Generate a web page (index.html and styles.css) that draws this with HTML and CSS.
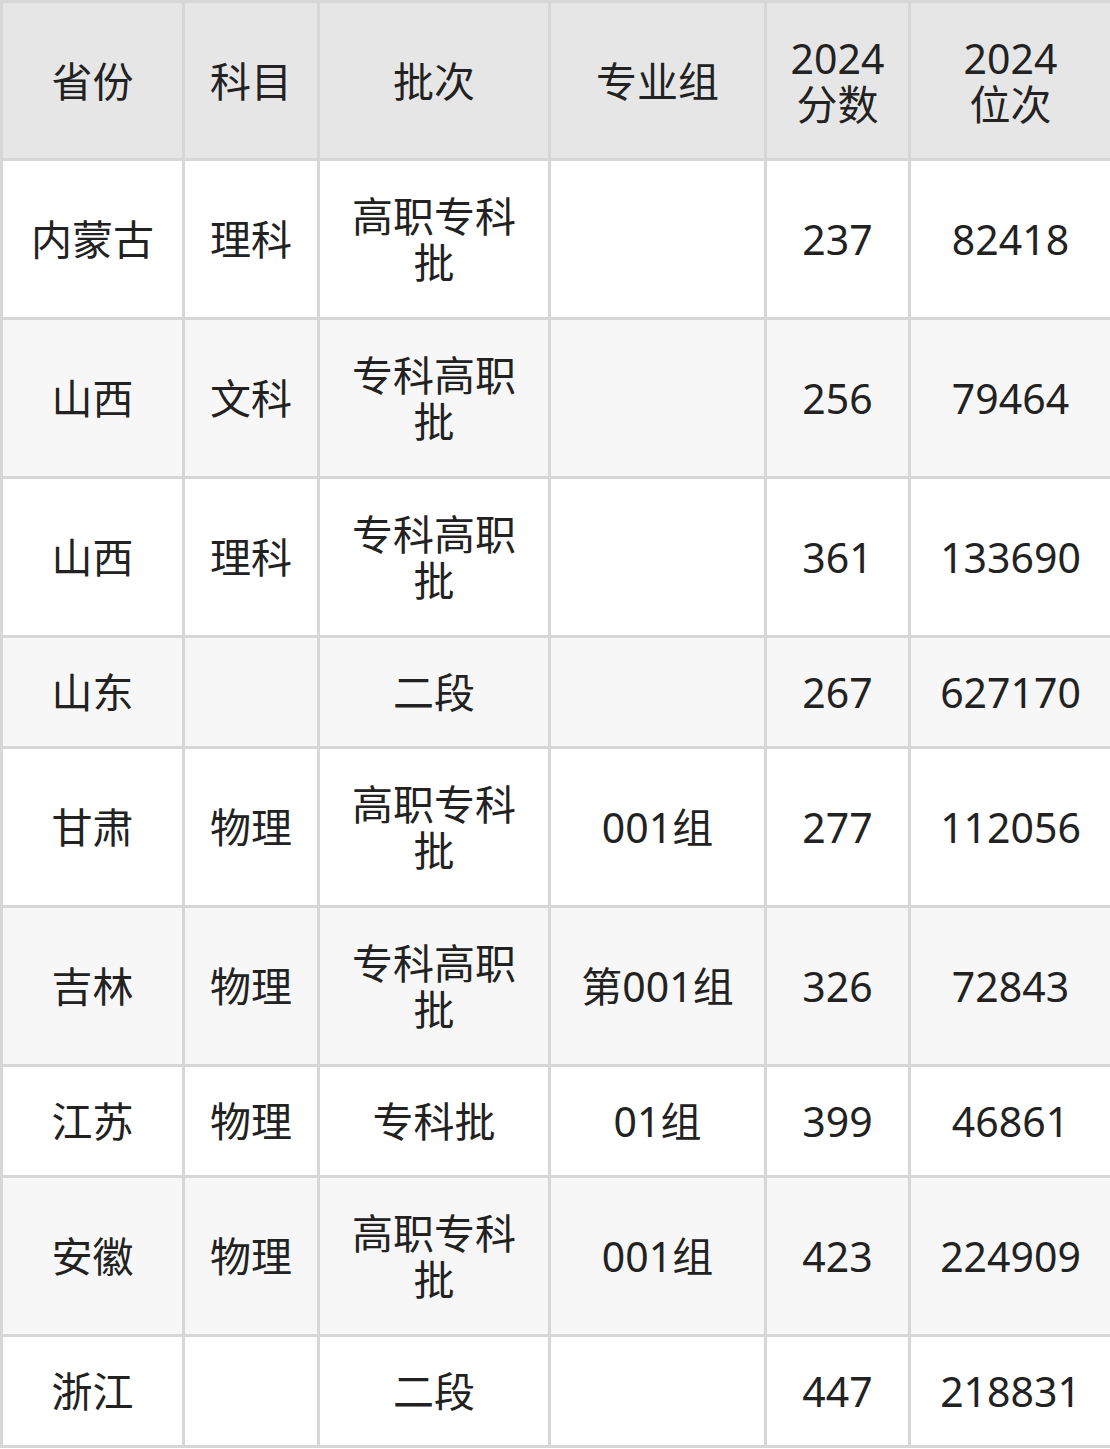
FILE: index.html
```html
<!DOCTYPE html>
<html lang="zh-CN">
<head>
<meta charset="utf-8">
<link rel="stylesheet" href="styles.css">
</head>
<body>
<table class="grid">
  <colgroup>
    <col class="c1"><col class="c2"><col class="c3"><col class="c4"><col class="c5"><col class="c6">
  </colgroup>
  <thead>
    <tr class="head"><th>省份</th><th>科目</th><th>批次</th><th>专业组</th><th>2024<br>分数</th><th>2024<br>位次</th></tr>
  </thead>
  <tbody>
    <tr class="tall"><td>内蒙古</td><td>理科</td><td>高职专科<br>批</td><td></td><td>237</td><td>82418</td></tr>
    <tr class="tall alt"><td>山西</td><td>文科</td><td>专科高职<br>批</td><td></td><td>256</td><td>79464</td></tr>
    <tr class="tall"><td>山西</td><td>理科</td><td>专科高职<br>批</td><td></td><td>361</td><td>133690</td></tr>
    <tr class="short alt"><td>山东</td><td></td><td>二段</td><td></td><td>267</td><td>627170</td></tr>
    <tr class="tall"><td>甘肃</td><td>物理</td><td>高职专科<br>批</td><td>001组</td><td>277</td><td>112056</td></tr>
    <tr class="tall alt"><td>吉林</td><td>物理</td><td>专科高职<br>批</td><td>第001组</td><td>326</td><td>72843</td></tr>
    <tr class="short"><td>江苏</td><td>物理</td><td>专科批</td><td>01组</td><td>399</td><td>46861</td></tr>
    <tr class="tall alt"><td>安徽</td><td>物理</td><td>高职专科<br>批</td><td>001组</td><td>423</td><td>224909</td></tr>
    <tr class="short"><td>浙江</td><td></td><td>二段</td><td></td><td>447</td><td>218831</td></tr>
  </tbody>
</table>
</body>
</html>
```

FILE: styles.css
```css
html, body {
  margin: 0;
  padding: 0;
  background: #ffffff;
}
.grid {
  width: 1110px;
  border-collapse: collapse;
  table-layout: fixed;
  font-family: "Noto Sans", "Noto Sans CJK SC", sans-serif;
  font-size: 41px;
  line-height: 46px;
  color: #222222;
}
.c1 { width: 182px; }
.c2 { width: 135px; }
.c3 { width: 231px; }
.c4 { width: 216px; }
.c5 { width: 144px; }
.c6 { width: 202px; }
.grid th, .grid td {
  border: 3px solid #d7d7d7;
  text-align: center;
  vertical-align: middle;
  padding: 0;
  font-weight: 400;
}
.head th {
  background: #e6e6e6;
  height: 155px;
}
.tall td { height: 156px; }
.short td { height: 108px; }
.alt td { background: #f7f7f7; }
```
